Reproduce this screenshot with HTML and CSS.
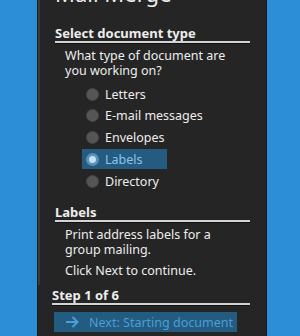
FILE: index.html
```html
<!DOCTYPE html>
<html lang="en">
<head>
  <meta charset="UTF-8" />
  <title>Mail Merge</title>
  <link rel="stylesheet" href="styles.css">
</head>
<body>
  <div class="pane">
    <div class="scroll"><div class="thumb"></div></div>
    <div class="content">
      <h1 class="title">Mail Merge</h1>

      <h2 class="section first">Select document type</h2>
      <p class="text">What type of document are you working on?</p>
      <ul class="options">
        <li class="option"><span class="radio"></span>Letters</li>
        <li class="option"><span class="radio"></span>E-mail messages</li>
        <li class="option"><span class="radio"></span>Envelopes</li>
        <li class="option selected"><span class="radio"></span>Labels</li>
        <li class="option"><span class="radio"></span>Directory</li>
      </ul>

      <h2 class="section">Labels</h2>
      <p class="text">Print address labels for a group mailing.</p>
      <p class="text gap">Click Next to continue.</p>

      <h2 class="section step">Step 1 of 6</h2>
      <button class="next">
        <svg class="arrow" width="14" height="12" viewBox="0 0 14 12">
          <path d="M1 6H12.5M7.5 1L12.5 6L7.5 11" fill="none" stroke="currentColor" stroke-width="2"/>
        </svg>
        Next: Starting document
      </button>
    </div>
  </div>
</body>
</html>
```

FILE: styles.css
```css
* {
  box-sizing: border-box;
  margin: 0;
  padding: 0;
}
body {
  background: #2b8ed6;
  font-family: 'Noto Sans', 'Open Sans', sans-serif;
  color: #ededed;
  height: 336px;
  overflow: hidden;
}
.pane {
  display: flex;
  margin-left: 37px;
  width: 230px;
  height: 336px;
  background: #252525;
  border-left: 1px solid #1a1a1a;
  border-right: 1px solid #1c1c1c;
}
.scroll {
  width: 3px;
  flex-shrink: 0;
}
.thumb {
  height: 285px;
  width: 2px;
  background: #3a3a3a;
}
.content {
  flex: 1;
  padding: 0 16px 0 14px;
}
.title {
  font-size: 22px;
  font-weight: normal;
  line-height: 26px;
  height: 26px;
  margin-top: -20px;
  white-space: nowrap;
}
.section {
  font-size: 13px;
  font-weight: bold;
  line-height: 16px;
  border-bottom: 2px solid #d4d4d4;
  box-shadow: 0 1px 0 #111;
  margin-top: 13px;
}
.section.first {
  margin-top: 19px;
}
.text {
  font-size: 12.5px;
  line-height: 15px;
  margin: 5px 10px 0 10px;
}
.text.gap {
  margin-top: 6px;
}
.options {
  list-style: none;
  margin: 6px 0 0 27px;
}
.option {
  display: flex;
  align-items: center;
  width: 85px;
  height: 20px;
  margin-bottom: 1.75px;
  font-size: 12.5px;
  white-space: nowrap;
}
.radio {
  flex-shrink: 0;
  width: 13px;
  height: 13px;
  border-radius: 50%;
  background: #555;
  border: 1px solid #474747;
  margin: 0 6px 0 4px;
}
.selected {
  background: #245b80;
  color: #8cc4ec;
}
.selected .radio {
  background: #c4e2f7;
  border: 3px solid #5b8fb3;
}
.step {
  margin: 9px 0 0 -3px;
}
.next {
  display: flex;
  align-items: center;
  width: 183px;
  height: 20px;
  margin-top: 7px;
  margin-left: -1px;
  background: #245b80;
  border: none;
  color: #4a9fd8;
  font-family: inherit;
  font-size: 12.5px;
  white-space: nowrap;
  padding-left: 11px;
}
.arrow {
  flex-shrink: 0;
  margin-right: 10px;
}
```
